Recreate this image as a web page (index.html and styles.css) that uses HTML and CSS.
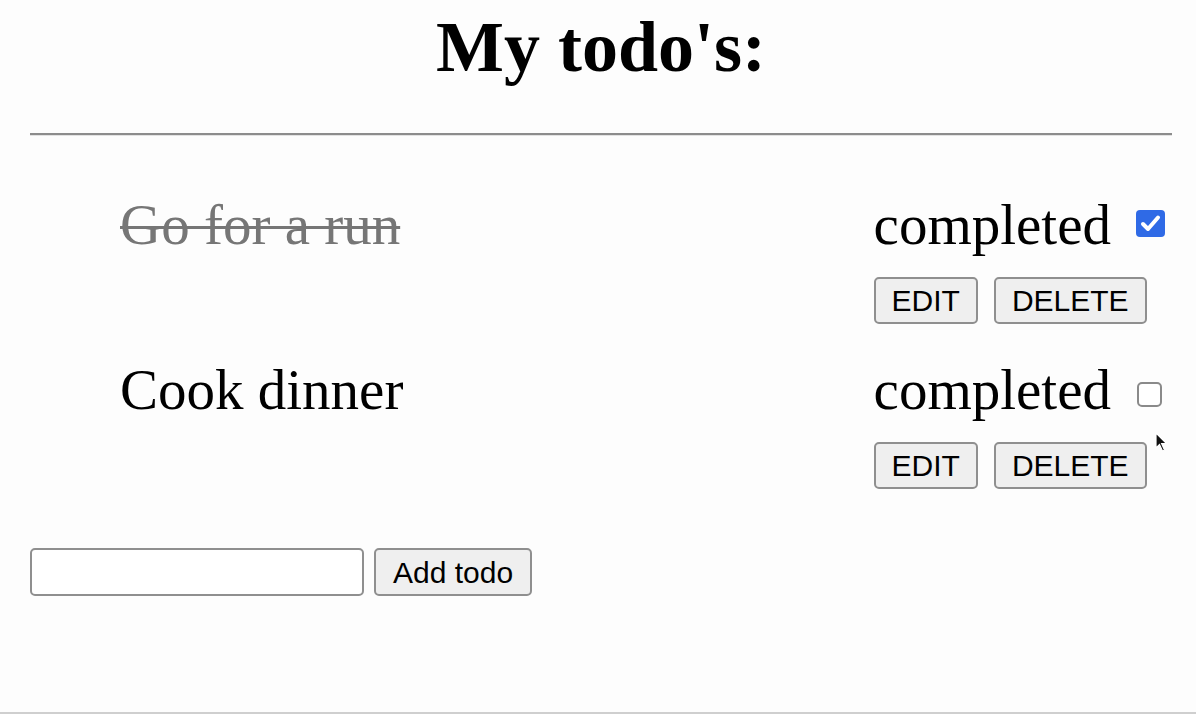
FILE: index.html
```html
<!DOCTYPE html>
<html lang="en">
<head>
<meta charset="utf-8">
<title>My todo's</title>
<link rel="stylesheet" href="styles.css">
</head>
<body>
<div class="app">
  <h1 class="title">My todo's:</h1>
  <hr class="rule">
  <ul class="todos">
    <li class="todo is-done">
      <span class="todo-text">Go for a run</span>
      <div class="todo-side">
        <label class="status">completed<input class="check" type="checkbox" checked></label>
        <div class="actions">
          <button class="btn" type="button">EDIT</button>
          <button class="btn" type="button">DELETE</button>
        </div>
      </div>
    </li>
    <li class="todo">
      <span class="todo-text">Cook dinner</span>
      <div class="todo-side">
        <label class="status">completed<input class="check" type="checkbox"></label>
        <div class="actions">
          <button class="btn" type="button">EDIT</button>
          <button class="btn" type="button">DELETE</button>
        </div>
      </div>
    </li>
  </ul>
  <form class="add-form">
    <input class="add-input" type="text">
    <button class="btn add-btn" type="button">Add todo</button>
  </form>
  <svg class="cursor" width="14" height="22" viewBox="0 0 14 22"><path d="M1 1 L1 16 L4.5 12.5 L7.5 19 L9.5 18 L6.6 11.6 L11.5 11.5 Z" fill="#111" stroke="#fff" stroke-width="1.2"/></svg>
</div>
</body>
</html>
```

FILE: styles.css
```css
html, body {
  margin: 0;
  padding: 0;
}
body {
  background: #fdfdfd;
  font-family: "Liberation Serif", "Times New Roman", serif;
  color: #000;
  min-height: 714px;
  box-sizing: border-box;
  border-bottom: 2px solid #cfcfcf;
}
.app {
  position: relative;
  padding: 6px 24px 0 30px;
}
.title {
  margin: 0;
  font-size: 72px;
  font-weight: bold;
  text-align: center;
  line-height: 83px;
}
.rule {
  margin: 44px 0 0;
  height: 0;
  border: 0;
  border-top: 2px solid #8c8c8c;
  border-bottom: 1px solid #e2e2e2;
}
.todos {
  list-style: none;
  margin: 56px 0 0;
  padding: 0;
}
.todo {
  display: flex;
  justify-content: space-between;
  align-items: flex-start;
  padding-left: 90px;
  margin-bottom: 33px;
  font-size: 57px;
  line-height: 65px;
}
.todo.is-done .todo-text {
  color: #767676;
  text-decoration: line-through;
  text-decoration-thickness: 3px;
}
.todo-side {
  display: flex;
  flex-direction: column;
  align-items: flex-start;
}
.status {
  display: block;
}
.check {
  appearance: none;
  -webkit-appearance: none;
  display: inline-block;
  box-sizing: border-box;
  width: 25px;
  height: 25px;
  margin: 0 10px 2px 26px;
  border: 2px solid #8a8a8a;
  border-radius: 5px;
  background: #fff;
  vertical-align: baseline;
}
.check:checked {
  width: 29px;
  height: 27px;
  margin: 0 7px 7px 25px;
  border: 0;
  border-radius: 4px;
  background: #2f6ae6 url("data:image/svg+xml;utf8,<svg xmlns='http://www.w3.org/2000/svg' viewBox='0 0 29 27'><path d='M7 14 L12 19 L22 7.5' fill='none' stroke='white' stroke-width='4' stroke-linecap='round' stroke-linejoin='round'/></svg>") no-repeat center / 100% 100%;
}
.actions {
  display: flex;
  gap: 16px;
  margin-top: 20px;
  line-height: normal;
}
.btn {
  font-family: "Liberation Sans", Arial, sans-serif;
  font-size: 30px;
  color: #000;
  background: #efefef;
  border: 2px solid #8f8f8f;
  border-radius: 5px;
  padding: 4px 16px;
  height: 47px;
  line-height: 35px;
  margin: 0;
}
.add-form {
  display: flex;
  gap: 10px;
  margin-top: 59px;
}
.add-input {
  width: 334px;
  height: 48px;
  box-sizing: border-box;
  border: 2px solid #8f8f8f;
  border-radius: 5px;
  background: #fff;
  margin: 0;
  padding: 0 6px;
  font-size: 30px;
}
.add-btn {
  height: 48px;
  padding: 4px 17px;
}
.cursor {
  position: absolute;
  left: 1155px;
  top: 432px;
}
```
